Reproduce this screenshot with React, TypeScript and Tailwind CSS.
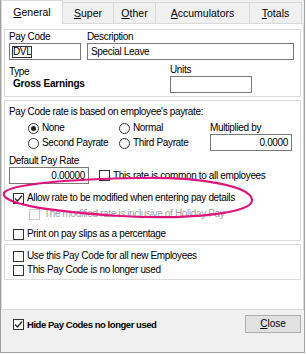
import React from 'react';

const font = "font-['Liberation_Sans',Arial,sans-serif]";

const Check: React.FC<{ checked?: boolean; disabled?: boolean }> = ({ checked, disabled }) => (
  <span
    className={`inline-flex items-center justify-center w-[11px] h-[11px] border bg-white shrink-0 ${
      disabled ? 'border-[#c8c8c8]' : 'border-[#333333]'
    }`}
  >
    {checked && (
      <svg width="9" height="9" viewBox="0 0 9 9">
        <path d="M1 4.5 L3.5 7 L8 1.5" fill="none" stroke="#222" strokeWidth="1.2" />
      </svg>
    )}
  </span>
);

const Radio: React.FC<{ checked?: boolean }> = ({ checked }) => (
  <span className="inline-flex items-center justify-center w-[11px] h-[11px] rounded-full border border-[#333333] bg-white shrink-0">
    {checked && <span className="w-[5px] h-[5px] rounded-full bg-[#222]" />}
  </span>
);

const Field: React.FC<{ className?: string; children?: React.ReactNode }> = ({ className = '', children }) => (
  <div className={`h-[17px] border border-[#7a7a7a] bg-white flex items-center px-[3px] whitespace-nowrap ${className}`}>{children}</div>
);

const tabs = [
  { u: 'S', rest: 'uper', w: 'w-[51px]' },
  { u: 'O', rest: 'ther', w: 'w-[42px]' },
  { u: 'A', rest: 'ccumulators', w: 'w-[94px]' },
  { u: 'T', rest: 'otals', w: 'w-[52px]' },
];

const row = 'flex items-center h-[12px] whitespace-nowrap';

export default function App() {
  return (
    <div className={`w-[306px] h-[354px] bg-white text-[10px] tracking-[-0.35px] text-black leading-[12px] ${font}`}>
      <div className="w-[305px] h-[353px] border-l border-r border-b border-[#a0a0a0] bg-[#f0f0f0] flex flex-col relative">
        {/* tab strip */}
        <div className="flex h-[23px] items-end relative z-10 text-[10.5px] tracking-normal">
          <div className="w-[62px] h-[24px] bg-white border border-b-0 border-[#d9d9d9] flex items-center justify-center pb-[2px] -mb-[1px]">
            <span>
              <span className="underline">G</span>eneral
            </span>
          </div>
          {tabs.map((t) => (
            <div
              key={t.u}
              className={`${t.w} h-[21px] bg-[#f0f0f0] border border-l-0 border-b-0 border-[#d9d9d9] flex items-center justify-center`}
            >
              <span>
                <span className="underline">{t.u}</span>
                {t.rest}
              </span>
            </div>
          ))}
        </div>

        {/* tab page */}
        <div className="h-[287px] bg-white border border-[#d9d9d9] px-[2px] pt-[5px] flex flex-col">
          {/* group 1 */}
          <div className="h-[68px] border border-[#dcdcdc] pl-[4px] pt-[1px] flex gap-[6px]">
            <div className="flex flex-col w-[72px] shrink-0">
              <span>Pay Code</span>
              <Field className="w-[72px]">
                <span className="outline outline-1 outline-[#333] leading-[10px]">DVL</span>
              </Field>
              <span className="mt-[6px]">Type</span>
              <span className="font-bold ml-[4px] tracking-[-0.2px] whitespace-nowrap">Gross Earnings</span>
            </div>
            <div className="flex flex-col">
              <span>Description</span>
              <Field className="w-[207px]">Special Leave</Field>
              <div className="ml-[83px] mt-[4px] flex flex-col">
                <span>Units</span>
                <Field className="w-[82px]" />
              </div>
            </div>
          </div>

          {/* group 2 */}
          <div className="h-[141px] mt-[3px] border border-[#dcdcdc] px-[4px] pt-[5px] flex flex-col">
            <span className="whitespace-nowrap">Pay Code rate is based on employee's payrate:</span>
            <div className="flex">
              <div className="flex flex-col gap-[3px] mt-[4px] ml-[19px]">
                <div className="flex">
                  <label className={`${row} gap-[3px] w-[91px]`}><Radio checked />None</label>
                  <label className={`${row} gap-[3px]`}><Radio />Normal</label>
                </div>
                <div className="flex">
                  <label className={`${row} gap-[3px] w-[91px]`}><Radio />Second Payrate</label>
                  <label className={`${row} gap-[3px]`}><Radio />Third Payrate</label>
                </div>
              </div>
              <div className="flex flex-col ml-auto mr-[4px] mt-[4px]">
                <span>Multiplied by</span>
                <Field className="w-[82px] justify-end">0.0000</Field>
              </div>
            </div>
            <span className="mt-[4px]">Default Pay Rate</span>
            <div className="flex items-center">
              <Field className="w-[80px] justify-end">0.00000</Field>
              <label className={`${row} gap-[3px] ml-[10px]`}><Check />This rate is common to all employees</label>
            </div>
            <label className={`${row} gap-[3px] ml-[4px] mt-[8px]`}><Check checked />Allow rate to be modified when entering pay details</label>
            <label className={`${row} gap-[4px] ml-[20px] mt-[4px] text-[#a0a0a0]`}><Check disabled />The modified rate is inclusive of Holiday Pay</label>
            <label className={`${row} gap-[3px] ml-[4px] mt-[8px]`}><Check />Print on pay slips as a percentage</label>
          </div>

          {/* group 3 */}
          <div className="h-[36px] mt-[3px] border border-[#dcdcdc] px-[8px] pt-[5px] flex flex-col gap-[2px]">
            <label className={`${row} gap-[3px]`}><Check />Use this Pay Code for all new Employees</label>
            <label className={`${row} gap-[3px]`}><Check />This Pay Code is no longer used</label>
          </div>
        </div>

        {/* bottom bar */}
        <div className="flex items-center justify-between pl-[12px] pr-[3px] mt-[5px]">
          <label className={`${row} gap-[3px] font-bold text-[9.5px] tracking-[-0.45px] mt-[1px]`}><Check checked />Hide Pay Codes no longer used</label>
          <button className="w-[56px] h-[18px] bg-[#e1e1e1] border border-[#adadad] flex items-center justify-center tracking-normal">
            <span><span className="underline">C</span>lose</span>
          </button>
        </div>

        {/* pink annotation */}
        <svg className="absolute left-0 top-0 pointer-events-none" width="306" height="354">
          <path
            d="M251 200 C250 186 200 177 140 178 C70 179 8 184 3 193 C0 203 40 211 120 216 C190 220 253 213 251 200"
            fill="none"
            stroke="#e0147a"
            strokeWidth="2.2"
          />
        </svg>
      </div>
    </div>
  );
}
